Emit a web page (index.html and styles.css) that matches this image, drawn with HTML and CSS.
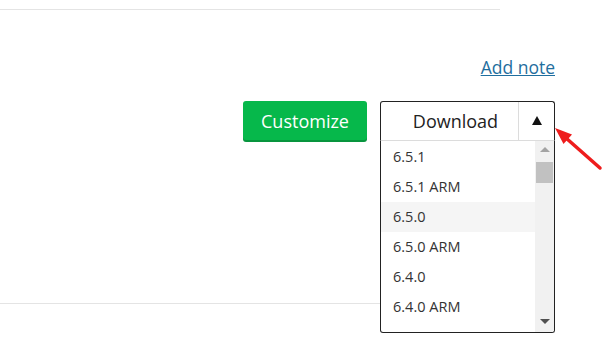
FILE: index.html
```html
<!DOCTYPE html>
<html lang="en">
<head>
    <meta charset="UTF-8">
    <title>Download</title>
    <link rel="stylesheet" href="styles.css">
</head>
<body>
    <div class="page">
        <div class="rule"></div>

        <div class="note-row">
            <a href="#" class="add-note">Add note</a>
        </div>

        <div class="actions">
            <button class="btn-customize">Customize</button>
            <div class="dropdown">
                <div class="dropdown-head">
                    <span class="dl-label">Download</span>
                    <span class="dl-caret">
                        <svg width="10" height="9" viewBox="0 0 10 9"><polygon points="5,0 10,9 0,9" fill="#111"/></svg>
                    </span>
                </div>
                <div class="dropdown-menu">
                    <ul class="versions">
                        <li>6.5.1</li>
                        <li>6.5.1 ARM</li>
                        <li class="hover">6.5.0</li>
                        <li>6.5.0 ARM</li>
                        <li>6.4.0</li>
                        <li>6.4.0 ARM</li>
                        <li>6.3.0</li>
                    </ul>
                    <div class="scrollbar">
                        <span class="sb-up"></span>
                        <span class="sb-thumb"></span>
                        <span class="sb-down"></span>
                    </div>
                </div>
                <svg class="pointer" width="52" height="50" viewBox="0 0 52 50">
                    <line x1="48" y1="45" x2="14" y2="15" stroke="#ee1c1c" stroke-width="3.5" stroke-linecap="round"/>
                    <polygon points="3,5 20,11.5 11.5,21" fill="#ee1c1c"/>
                </svg>
            </div>
        </div>

        <div class="rule bottom"></div>
    </div>
</body>
</html>
```

FILE: styles.css
```css
body {
    margin: 0;
    padding: 0;
    min-height: 100vh;
    background: #fff;
    font-family: 'Open Sans', 'Liberation Sans', sans-serif;
    color: #333;
}

.page {
    width: 555px;
    padding-top: 9px;
    padding-bottom: 48px;
}

.rule {
    width: 500px;
    border-top: 1px solid #e4e4e4;
}

.rule.bottom {
    margin-top: 162px;
}

.note-row {
    display: flex;
    justify-content: flex-end;
    margin-top: 45px;
}

.add-note {
    font-size: 17.5px;
    line-height: 24px;
    color: #1f6e9e;
    text-decoration: underline;
}

.actions {
    display: flex;
    justify-content: flex-end;
    align-items: flex-start;
    gap: 13px;
    margin-top: 22px;
}

.btn-customize {
    width: 124px;
    height: 39px;
    padding: 0;
    border: none;
    border-radius: 3px;
    background-color: #06b84b;
    box-shadow: 0 2px 0 #08953e;
    color: #fff;
    font-family: inherit;
    font-size: 18px;
    cursor: pointer;
}

.dropdown {
    position: relative;
    width: 175px;
}

.dropdown-head {
    display: flex;
    height: 40px;
    box-sizing: border-box;
    border: 1px solid #222;
    border-bottom-color: #dcdcdc;
    border-radius: 3px 3px 0 0;
    background: #fff;
}

.dl-label {
    flex: 1;
    padding-left: 12px;
    text-align: center;
    font-size: 18px;
    line-height: 39px;
    color: #222;
}

.dl-caret {
    display: flex;
    align-items: center;
    justify-content: center;
    width: 35px;
    padding-bottom: 1px;
    border-left: 1px solid #dcdcdc;
}

.dropdown-menu {
    position: absolute;
    top: 100%;
    left: 0;
    width: 100%;
    height: 192px;
    box-sizing: border-box;
    display: flex;
    border: 1px solid #222;
    border-top: none;
    border-radius: 0 0 3px 3px;
    background: #fff;
    overflow: hidden;
    z-index: 2;
}

.versions {
    flex: 1;
    list-style: none;
    margin: 0;
    padding: 1px 0 0;
}

.versions li {
    height: 30px;
    padding-left: 12px;
    font-size: 14.5px;
    line-height: 30px;
    color: #333;
}

.versions li.hover {
    background: #f5f5f5;
}

.scrollbar {
    position: relative;
    width: 19px;
    background: #f1f1f1;
}

.sb-up,
.sb-down {
    position: absolute;
    left: 5px;
    width: 0;
    height: 0;
    border-left: 5px solid transparent;
    border-right: 5px solid transparent;
}

.sb-up {
    top: 6px;
    border-bottom: 5px solid #a3a3a3;
}

.sb-down {
    bottom: 8px;
    border-top: 5px solid #505050;
}

.sb-thumb {
    position: absolute;
    top: 21px;
    left: 1px;
    width: 17px;
    height: 21px;
    background: #c1c1c1;
}

.pointer {
    position: absolute;
    left: 172px;
    top: 22px;
    z-index: 3;
}
```
